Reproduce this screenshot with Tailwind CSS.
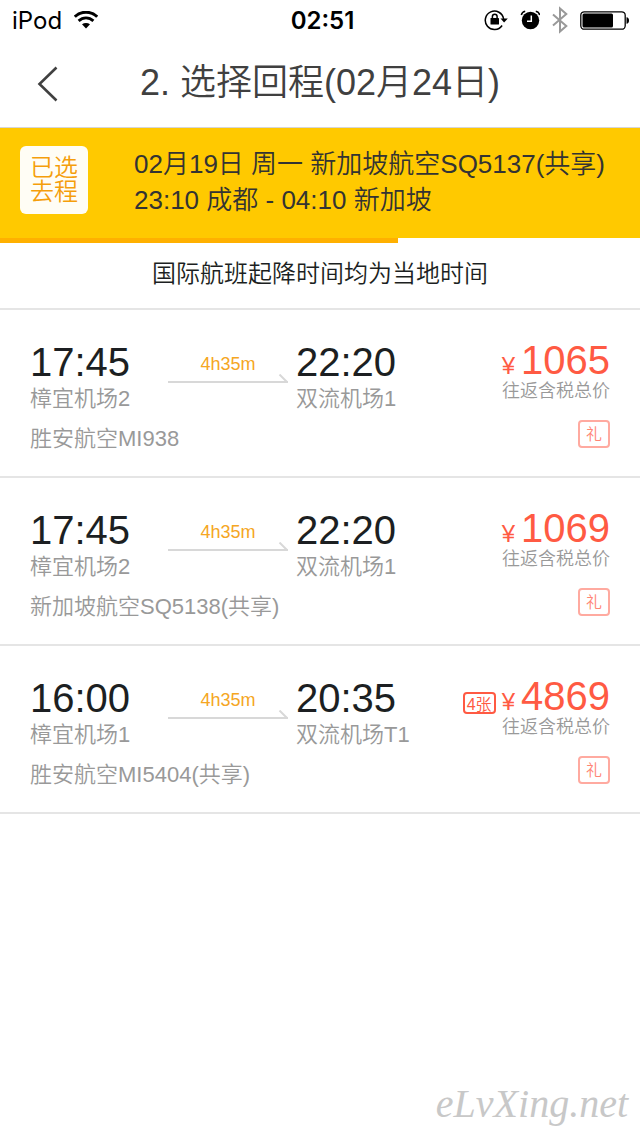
<!DOCTYPE html>
<html lang="zh-CN">
<head>
<meta charset="utf-8">
<meta name="viewport" content="width=device-width, initial-scale=1">
<title>选择回程</title>
<script src="https://cdn.jsdelivr.net/npm/@tailwindcss/browser@4"></script>
</head>
<body class="flex min-h-screen flex-col bg-white font-['Liberation_Sans','Noto_Sans_CJK_SC',sans-serif] font-[350] text-[#1c1f22]">

<!-- Status bar -->
<div class="grid h-10 grid-cols-[1fr_auto_1fr] items-center pr-[11px] pl-3 font-['Inter','Liberation_Sans',sans-serif] text-black">
  <div class="flex items-center gap-3">
    <span class="pt-0.5 text-2xl font-normal">iPod</span>
    <svg class="h-[18px] w-6" viewBox="0 0 24 18" fill="none" stroke="#000" aria-label="Wi-Fi">
      <path d="M.8 5.800C7 -.3 17 -.3 23.200 5.800" stroke-width="3"/>
      <path d="M4.600 9.900C9 5.900 15 5.900 19.400 9.900" stroke-width="2.800"/>
      <path d="M8 13.300C10.400 11.400 13.600 11.400 16 13.300L12 17.600Z" fill="#000" stroke="none"/>
    </svg>
  </div>
  <span class="pt-0.5 pl-1 text-2xl font-semibold">02:51</span>
  <div class="flex items-center justify-end gap-3">
    <svg class="h-[22px] w-6" viewBox="0 0 24 22" fill="none" stroke="#000" aria-label="方向锁定">
      <path d="M18.100 16.500A9.200 9.200 0 1 1 19.600 10" stroke-width="1.500"/>
      <path d="M16.500 9.500H23.800L20.100 13.500Z" fill="#000" stroke="none"/>
      <rect x="6.500" y="9" width="8.500" height="6.500" rx=".6" fill="#000" stroke="none"/>
      <path d="M8.400 9.500V7.500a2.350 2.350 0 0 1 4.700 0V9.500" stroke-width="1.500"/>
    </svg>
    <svg class="h-5 w-5" viewBox="0 0 20 20" fill="none" stroke="#000" aria-label="闹钟">
      <circle cx="10.500" cy="10.500" r="8.700" fill="#000" stroke="none"/>
      <path d="M1.300 5Q2 2 5.200 1.300M19.700 5Q19 2 15.800 1.300" stroke-width="1.500"/>
      <path d="M11.300 5.500V11.300H7" stroke="#fff" stroke-width="1.500"/>
    </svg>
    <svg class="h-7 w-4" viewBox="0 0 16 28" fill="none" stroke="#999" stroke-width="2" aria-label="蓝牙">
      <path d="M1 8.500L14.300 20L8 25.500V2.500L14.300 8L1 19.500"/>
    </svg>
    <svg class="h-[19px] w-[49px]" viewBox="0 0 49 19" fill="none" aria-label="电池">
      <rect x=".8" y=".8" width="44.400" height="17.400" rx="3.500" stroke="#000" stroke-width="1.300"/>
      <rect x="2.500" y="2.500" width="30.500" height="14" rx="1.500" fill="#000"/>
      <path d="M46.500 6.200Q49 6.500 49 9.500T46.500 12.800Z" fill="#000"/>
    </svg>
  </div>
</div>

<!-- Navigation -->
<header class="grid h-22 grid-cols-[80px_1fr_80px] items-center border-b border-[#d5d5d8] text-[#404040]">
  <button type="button" class="flex h-full items-center pl-9" aria-label="返回">
    <svg class="h-9 w-6" viewBox="0 0 24 36" fill="none" stroke="#404040" stroke-width="2.600"><path d="M20.500 1.500L3.500 18L20.500 34.500"/></svg>
  </button>
  <h1 class="pb-0.5 text-center text-4xl font-[350] whitespace-nowrap">2. 选择回程(02月24日)</h1>
</header>

<!-- Selected outbound flight -->
<section class="flex h-[110px] items-start bg-[#ffc900] px-5 pt-[18px]">
  <div class="flex size-[68px] flex-col justify-center rounded-md bg-[#fffdf5] text-center text-2xl leading-6 text-[#f59e0b]">
    <span>已选</span><span>去程</span>
  </div>
  <div class="ml-[46px] text-[26px] leading-9 whitespace-nowrap text-[#333]">
    <p>02月19日 周一 新加坡航空SQ5137(共享)</p>
    <p>23:10 成都 - 04:10 新加坡</p>
  </div>
</section>
<div class="h-[5px]"><div class="h-full bg-[#ffb000]" style="width:62.2%"></div></div>

<p class="h-[67px] border-b-2 border-[#e5e5e5] text-center text-2xl leading-[62px]">国际航班起降时间均为当地时间</p>

<!-- Return flights -->
<ul>
  <li class="border-b-2 border-[#e5e5e5]">
    <a href="#mi938" class="flex h-[166px] justify-between px-[30px] pt-8 text-[22px] text-[#999]">
      <div>
        <div class="flex">
          <div class="w-[138px]">
            <p class="text-[40px] leading-10 text-[#1c1f22]">17:45</p>
            <p class="leading-[34px]">樟宜机场2</p>
          </div>
          <div class="w-32 pt-2">
            <p class="w-30 text-center text-lg leading-7 text-[#f5a623]">4h35m</p>
            <svg class="-mt-1 h-[9px] w-30" viewBox="0 0 120 9" fill="none" stroke="#d8d8d8" stroke-width="2" aria-hidden="true"><path d="M0 8H120M119 8L111.500 .5"/></svg>
          </div>
          <div>
            <p class="text-[40px] leading-10 text-[#1c1f22]">22:20</p>
            <p class="leading-[34px]">双流机场1</p>
          </div>
        </div>
        <p class="mt-[3px] leading-10">胜安航空MI938</p>
      </div>
      <div class="-mt-0.5 flex flex-col items-end">
        <p class="flex h-10 items-baseline gap-1.5 text-[40px] leading-10 text-[#ff5a43]"><span class="text-2xl leading-6">¥</span>1065</p>
        <p class="text-lg leading-[22px]">往返含税总价</p>
        <span class="mt-[18px] flex h-7 w-8 items-center justify-center rounded border-2 border-[#ffaaa0] pt-0.5 text-base leading-6 text-[#ff8475]">礼</span>
      </div>
    </a>
  </li>
  <li class="border-b-2 border-[#e5e5e5]">
    <a href="#sq5138" class="flex h-[166px] justify-between px-[30px] pt-8 text-[22px] text-[#999]">
      <div>
        <div class="flex">
          <div class="w-[138px]">
            <p class="text-[40px] leading-10 text-[#1c1f22]">17:45</p>
            <p class="leading-[34px]">樟宜机场2</p>
          </div>
          <div class="w-32 pt-2">
            <p class="w-30 text-center text-lg leading-7 text-[#f5a623]">4h35m</p>
            <svg class="-mt-1 h-[9px] w-30" viewBox="0 0 120 9" fill="none" stroke="#d8d8d8" stroke-width="2" aria-hidden="true"><path d="M0 8H120M119 8L111.500 .5"/></svg>
          </div>
          <div>
            <p class="text-[40px] leading-10 text-[#1c1f22]">22:20</p>
            <p class="leading-[34px]">双流机场1</p>
          </div>
        </div>
        <p class="mt-[3px] leading-10">新加坡航空SQ5138(共享)</p>
      </div>
      <div class="-mt-0.5 flex flex-col items-end">
        <p class="flex h-10 items-baseline gap-1.5 text-[40px] leading-10 text-[#ff5a43]"><span class="text-2xl leading-6">¥</span>1069</p>
        <p class="text-lg leading-[22px]">往返含税总价</p>
        <span class="mt-[18px] flex h-7 w-8 items-center justify-center rounded border-2 border-[#ffaaa0] pt-0.5 text-base leading-6 text-[#ff8475]">礼</span>
      </div>
    </a>
  </li>
  <li class="border-b-2 border-[#e5e5e5]">
    <a href="#mi5404" class="flex h-[166px] justify-between px-[30px] pt-8 text-[22px] text-[#999]">
      <div>
        <div class="flex">
          <div class="w-[138px]">
            <p class="text-[40px] leading-10 text-[#1c1f22]">16:00</p>
            <p class="leading-[34px]">樟宜机场1</p>
          </div>
          <div class="w-32 pt-2">
            <p class="w-30 text-center text-lg leading-7 text-[#f5a623]">4h35m</p>
            <svg class="-mt-1 h-[9px] w-30" viewBox="0 0 120 9" fill="none" stroke="#d8d8d8" stroke-width="2" aria-hidden="true"><path d="M0 8H120M119 8L111.500 .5"/></svg>
          </div>
          <div>
            <p class="text-[40px] leading-10 text-[#1c1f22]">20:35</p>
            <p class="leading-[34px]">双流机场T1</p>
          </div>
        </div>
        <p class="mt-[3px] leading-10">胜安航空MI5404(共享)</p>
      </div>
      <div class="-mt-0.5 flex flex-col items-end">
        <p class="flex h-10 items-baseline gap-1.5 text-[40px] leading-10 text-[#ff5a43]"><span class="flex h-[22px] w-[33px] items-center justify-center rounded border-2 border-[#ff5a43] pt-1 text-base leading-5">4张</span><span class="text-2xl leading-6">¥</span>4869</p>
        <p class="text-lg leading-[22px]">往返含税总价</p>
        <span class="mt-[18px] flex h-7 w-8 items-center justify-center rounded border-2 border-[#ffaaa0] pt-0.5 text-base leading-6 text-[#ff8475]">礼</span>
      </div>
    </a>
  </li>
</ul>

<footer class="mt-auto pr-3 pb-2 text-right font-['Z003','URW_Chancery_L','Apple_Chancery','Liberation_Serif',cursive] text-[40px] leading-12 font-normal text-[#c8c8c8] italic">eLvXing.net</footer>
</body>
</html>
